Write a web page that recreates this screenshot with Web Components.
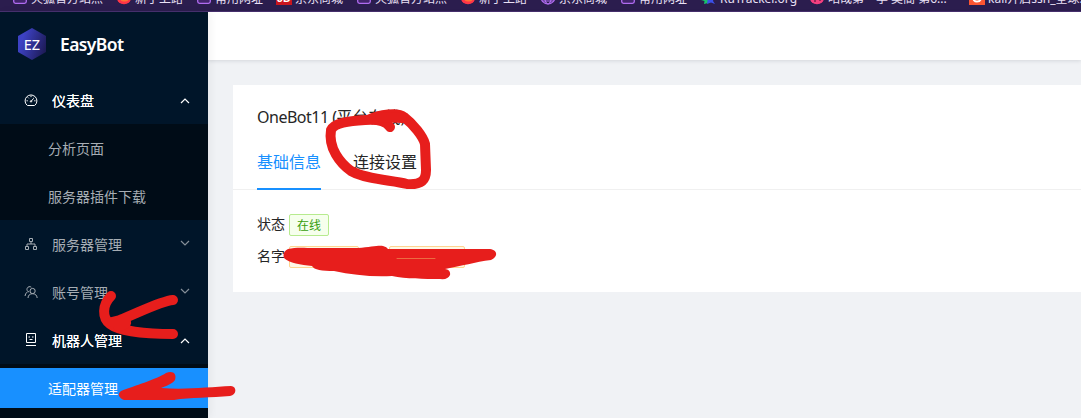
<!DOCTYPE html>
<html lang="zh">
<head>
<meta charset="utf-8">
<title>EasyBot</title>
<style>
html,body{margin:0;height:100%;overflow:hidden}
body{font-family:"Noto Sans","Noto Sans CJK SC",sans-serif;font-size:14px;background:#f0f2f5}
</style>
</head>
<body>
<easy-app></easy-app>
<script>
const define=(name,html,setup)=>customElements.define(name,class extends HTMLElement{
  connectedCallback(){
    if(this.shadowRoot)return;
    const root=this.attachShadow({mode:'open'});
    const t=document.createElement('template');
    t.innerHTML=html;
    root.append(t.content.cloneNode(true));
    if(setup)setup(this,root);
  }
});

const marks={
folder:'<path d="M1.700 4V12.500Q1.700 14.300 3.500 14.300H12.500Q14.300 14.300 14.300 12.500V4" fill="#41246b" stroke="#b06cf0" stroke-width="1.300"/>',
fox:'<defs><linearGradient id="g" x2="0" y2="1"><stop offset=".5" stop-color="#ffb42a"/><stop offset="1" stop-color="#ff5a38"/></linearGradient></defs><circle cx="8" cy="8" r="7.300" fill="#ff3647"/><circle cx="8.500" cy="8" r="4.800" fill="url(#g)"/>',
jd:'<path d="M0 0H16V16H0Z" fill="#c9151e"/><text x="8" y="13.300" text-anchor="middle" font-family="Liberation Sans" font-weight="700" font-size="11" fill="#fff">JD</text>',
globe:'<g fill="none" stroke="#b06cf0" stroke-width="1.200"><circle cx="8" cy="8" r="7"/><ellipse cx="8" cy="8" rx="3.200" ry="7"/><path d="M1 8H15M2 12H14"/></g>',
tracker:'<path d="M0 8H7V14L3 15 3.500 12 0 11Z" fill="#18c36a"/><path d="M7 8H13L12 12 14 15 10 13.500 6 15Z" fill="#3b50e8"/>',
pink:'<circle cx="8" cy="8" r="7.300" fill="#f43f7f"/><circle cx="6" cy="12" r="1" fill="#7c1f4c"/><circle cx="11" cy="11" r="1" fill="#7c1f4c"/>',
csdn:'<path d="M0 0H16V16H0Z" fill="#fc5531"/><path d="M12 9Q11.500 12.500 8 12.500 4 12.500 4.500 8" fill="none" stroke="#fff" stroke-width="2"/>'
};
define('book-mark',`<style>
:host{display:flex;flex:none;gap:3px;height:16px;font-size:12px;line-height:20px;color:#e9e0f5;white-space:nowrap}
svg{flex:none;width:16px;height:16px}
</style><svg viewBox="0 0 16 16"></svg><slot></slot>`,(h,r)=>{
  r.querySelector('svg').innerHTML=marks[h.getAttribute('icon')];
  h.style.width=h.getAttribute('w')+'px';
});
define('browser-bar',`<style>
:host{display:flex;align-items:flex-end;box-sizing:border-box;height:12px;padding:0 0 6px 12px;background:#2b1d4e;border-bottom:1px solid #47316f;overflow:hidden}
</style>
<book-mark icon="folder" w="104">火狐官方站点</book-mark><book-mark icon="fox" w="80">新手上路</book-mark><book-mark icon="folder" w="80">常用网址</book-mark><book-mark icon="jd" w="80">京东商城</book-mark><book-mark icon="folder" w="104">火狐官方站点</book-mark><book-mark icon="fox" w="80">新手上路</book-mark><book-mark icon="globe" w="80">京东商城</book-mark><book-mark icon="folder" w="81">常用网址</book-mark><book-mark icon="tracker" w="108">RuTracker.org</book-mark><book-mark icon="pink" w="160">咕哉第一季 樊簡 第6...</book-mark><book-mark icon="csdn" w="130">kali开启ssh_全球...</book-mark>`);

const icons={
dash:'<path d="M3 12.200A5.900 5.900 0 1 1 11 12.200Q10.700 12.500 10.200 12.500H3.800Q3.300 12.500 3 12.200Z"/><path d="M7 8.500L9.700 5.300M7 2.800V4.100M3.900 4.400L4.800 5.300M2.500 7.800H3.800M10.200 7.800H11.500M9.400 4.100L9.700 3.900"/><circle cx="7" cy="8.400" r=".7"/>',
tree:'<path d="M5.500 1.500H8.500V4.500H5.500ZM1.500 9.500H4.500V12.500H1.500ZM9.500 9.500H12.500V12.500H9.500ZM7 4.500V7M3 9.500V7H11V9.500"/>',
users:'<circle cx="8.600" cy="6" r="2.600"/><path d="M4 13Q4.300 8.800 8.600 8.700 12.700 8.800 13.200 13M5.200 7A2.700 2.700 0 1 1 7.300 2.200M1 11Q1.200 8 3.700 6.800"/>',
robot:'<path d="M2.500 .5H11.500V9.500H2.500ZM2 12.500H12M4.500 4H6M8 4H9.500M5.500 6.500H8.500"/>'
};
define('menu-group',`<style>
:host{display:flow-root;color:#a6adb4}
:host([open]){color:#fff}
header{display:flex;align-items:center;box-sizing:border-box;height:40px;padding:0 18px 0 24px;margin:4px 0}
svg{fill:none;stroke:currentColor}
.i{width:14px;height:14px;margin-right:14px;stroke-width:1}
span{flex:1;line-height:40px;padding-top:2px}
:host([open]) span{text-shadow:0 0 .3px #fff}
.a{width:10px;height:10px;stroke-width:1.200;margin-bottom:2px;opacity:.8}
:host([open]) .a{transform:scaleY(-1);margin:2px 0 0;opacity:1}
section{background:#000c17}
:host([open]) section{padding:.1px 0}
</style><header><svg class="i" viewBox="0 0 14 14"></svg><span></span><svg class="a" viewBox="0 0 10 10"><path d="M1 3L5 7 9 3"/></svg></header><section><slot></slot></section>`,(h,r)=>{
  r.querySelector('.i').innerHTML=icons[h.getAttribute('icon')];
  r.querySelector('span').textContent=h.getAttribute('label');
});
define('menu-item',`<style>
:host{display:block;height:40px;line-height:42px;padding-left:48px;margin:4px 0 8px;color:#a6adb4}
:host(:last-child){margin-bottom:4px}
:host([active]){background:#1890ff;color:#fff}
</style><slot></slot>`);
define('side-nav',`<style>
:host{display:block;width:208px;background:#001529;overflow:hidden}
.brand{display:flex;align-items:center;height:64px;padding-left:16px;color:#fff;font-size:17.500px;font-weight:600;letter-spacing:-.6px}
.brand svg{width:32px;height:32px;margin-right:12px}
</style>
<div class="brand"><svg viewBox="0 0 32 32"><defs><linearGradient id="b" x1="0" y1=".3" x2="1" y2=".7"><stop offset=".15" stop-color="#3d42c4"/><stop offset="1" stop-color="#1d1a55"/></linearGradient></defs><path d="M16 0L30 8V24L16 32 2 24V8Z" fill="url(#b)"/><text x="16" y="21.500" text-anchor="middle" font-family="Noto Sans" font-weight="400" font-size="14.500" letter-spacing="0" fill="#fff">EZ</text></svg>EasyBot</div>
<menu-group icon="dash" label="仪表盘" open><menu-item>分析页面</menu-item><menu-item>服务器插件下载</menu-item></menu-group>
<menu-group icon="tree" label="服务器管理"></menu-group>
<menu-group icon="users" label="账号管理"></menu-group>
<menu-group icon="robot" label="机器人管理" open><menu-item active>适配器管理</menu-item><menu-item></menu-item></menu-group>`);
define('tab-item',`<style>
:host{display:block;box-sizing:border-box;height:51px;font-size:16px;line-height:46px;color:#262626}
:host([active]){color:#1890ff;border-bottom:2px solid #1890ff}
</style><slot></slot>`);
define('status-tag',`<style>
:host{display:inline-block;box-sizing:border-box;height:22px;line-height:22px;padding:0 7px;border:1px solid #b7eb8f;border-radius:2px;background:#f6ffed;color:#389e0d;font-size:12px}
:host([kind=name]){border-color:#ffd591;background:#fff7e6;color:#d46b08}
</style><slot></slot>`);
define('info-card',`<style>
:host{display:block;height:207px;margin:25px 0 0 25px;background:#fff;color:#262626}
h1{margin:0;padding:20px 24px 0;font-size:16px;font-weight:400;line-height:24px;height:34px}
h1 span{letter-spacing:-.5px}
nav{display:flex;gap:32px;padding:0 24px;height:50px;border-bottom:1px solid #f0f0f0}
.row{display:flex;align-items:center;gap:4px;height:22px;line-height:20px;margin:0 24px 10px}
.row>span{height:22px}
.first{margin-top:24px}
.n{width:70px}.m{width:76px;margin-left:26px}
status-tag{box-sizing:border-box}
</style>
<h1><span>OneBot11 (</span>平台在线)</h1>
<nav><tab-item active>基础信息</tab-item><tab-item>连接设置</tab-item></nav>
<div class="row first"><span>状态</span><status-tag>在线</status-tag></div>
<div class="row"><span>名字</span><status-tag kind="name" class="n"></status-tag><status-tag kind="name" class="m"></status-tag></div>`);
define('red-ink',`<style>
:host{position:absolute;inset:0;pointer-events:none}
svg{display:block;fill:none;stroke:#e71e1c;stroke-width:10;stroke-linecap:round;stroke-linejoin:round}
.f{fill:#e71e1c;stroke:none}
</style><svg width="1081" height="418" viewBox="0 0 1081 418">
<path d="M390 127C386 121 377 119 365 120C348 121 334 123 331 130C328 148 340 163 351 171C368 180 391 180 407 184C422 185 426 180 426 170L425 144C423 136 413 124 404 117C398 112 380 114 368 120"/>
<path d="M380 117L402 118"/>
<path d="M111 296C102 305 102 318 110 324C119 331 146 334 173 334"/>
<path d="M173 300C161 301 140 312 120 320L112 322C125 320 133 323 118 326"/>
<path class="f" d="M121 391C134 386 157 379 166 373C173 370 177 374 175 380C172 384 166 386 161 388C185 390 210 387 231 386C237 386 237 395 230 396C212 398 190 397 174 400L124 400C119 398 117 394 121 391Z"/>
<path class="f" d="M288 249C296 247 306 248 313 248L358 248C371 247 379 245 383 246Q387 247 388 249H490C498 250 498 257 491 260C475 262 462 266 445 269Q451 270 450 275Q448 280 440 279C424 279 406 279 392 276C372 277 352 275 334 271C322 271 314 270 312 266C301 265 289 263 284 258Q282 252 288 249Z"/>
<path d="M397 258.500H435" stroke="#ee8c52" stroke-width=".7"/>
</svg>`);
define('easy-app',`<style>
:host{display:flex;flex-direction:column;position:relative;width:1081px;height:418px;overflow:hidden}
.body{flex:1;min-height:0;display:grid;grid-template-columns:208px 1fr}
side-nav{z-index:1;box-shadow:2px 0 8px rgba(0,21,41,.06)}
main{min-width:0}
.top{height:48px;background:#fff;box-shadow:0 1px 4px rgba(0,21,41,.12)}
red-ink{z-index:3}
</style>
<browser-bar></browser-bar>
<div class="body"><side-nav></side-nav><main><div class="top"></div><info-card></info-card></main></div>
<red-ink></red-ink>`);
</script>
</body>
</html>
